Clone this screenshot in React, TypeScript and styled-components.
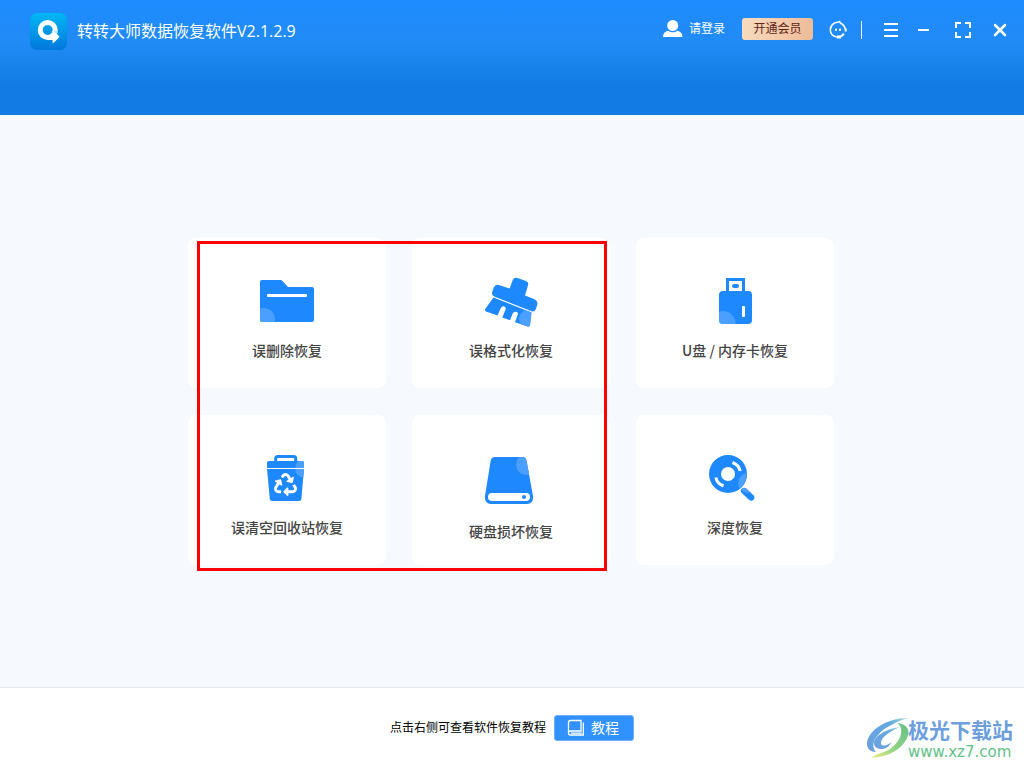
import React from "react";
import styled, { createGlobalStyle } from "styled-components";
import { FaRecycle } from "react-icons/fa";

const BLUE = "#1e88ff";
const SHINE = "#4ba0ff";

const GlobalStyle = createGlobalStyle`
  * { box-sizing: border-box; }
  body {
    margin: 0;
    font-family: "Open Sans", "Noto Sans CJK SC", sans-serif;
    color: #444;
  }
  button { font: inherit; cursor: pointer; }
`;

const Page = styled.div`
  position: relative;
  display: flex;
  flex-direction: column;
  min-height: 100vh;
  background: #f6f9fe;
`;

const Header = styled.header`
  height: 115px;
  background: linear-gradient(#1e8cff 0, #218bf5 42px, #127ce4 88px);
  color: #fff;
`;

const TitleBar = styled.div`
  display: flex;
  align-items: center;
  height: 63px;
  padding: 0 14px 0 30px;
`;

const Title = styled.h1`
  flex: 1;
  margin: 0 0 0 10px;
  padding-bottom: 2px;
  font-size: 16px;
  line-height: 24px;
  font-weight: 400;
`;

const Tools = styled.div`
  display: flex;
  align-items: center;
  align-self: flex-start;
  height: 59px;
`;

const Account = styled.div`
  display: flex;
  align-items: center;
  gap: 16px;
  margin-right: 12px;
`;

const WindowControls = styled.div`
  display: flex;
  align-items: center;
  gap: 17px;
`;

const Divider = styled.span`
  width: 1px;
  height: 18px;
  background: #fff;
`;

const IconButton = styled.button`
  display: flex;
  padding: 0;
  border: 0;
  background: none;
  color: #fff;
`;

const LoginButton = styled(IconButton)`
  align-items: center;
  gap: 6px;
  font-size: 12px;
  line-height: 18px;
  padding: 0 1px 2px 0;
`;

const VipButton = styled.button`
  width: 71px;
  height: 22px;
  margin-bottom: 1px;
  padding: 0;
  border: 0;
  border-radius: 3px;
  background: linear-gradient(100deg, #f8dcc0, #edbb98);
  color: #5e2416;
  font-size: 12px;
  line-height: 18px;
`;

const Main = styled.main`
  flex: 1;
  display: flex;
  align-items: center;
  justify-content: center;
  padding: 24px 26px 24px 24px;
`;

const Grid = styled.div`
  position: relative;
  display: grid;
  grid-template-columns: repeat(3, 198px);
  gap: 27px 26px;
`;

const Card = styled.button<{ $iconGap: number }>`
  display: flex;
  flex-direction: column;
  align-items: center;
  justify-content: flex-start;
  gap: ${(p) => p.$iconGap}px;
  height: 150px;
  padding: 34px 0 0;
  border: 0;
  border-radius: 8px;
  background: #fff;
  color: #444;
  font-size: 14px;
  line-height: 20px;
  font-weight: 500;
  font-family: "Noto Sans CJK SC", sans-serif;
`;

const Highlight = styled.div`
  position: absolute;
  inset: 3px 227px -6px 9px;
  border: 3px solid #fe0000;
  pointer-events: none;
`;

const Footer = styled.footer`
  display: flex;
  align-items: center;
  justify-content: center;
  gap: 8px;
  height: 81px;
  border-top: 1px solid #e6ebf1;
  background: #fff;
  color: #000;
  font-size: 12px;
  line-height: 18px;
`;

const GuideButton = styled.button`
  display: flex;
  align-items: center;
  gap: 6px;
  width: 80px;
  height: 26px;
  padding: 0 12px;
  border: 1px solid #6db1ff;
  border-radius: 3px;
  background: #3091ff;
  color: #fff;
  font-size: 14px;
  line-height: 20px;
  white-space: nowrap;
`;

const Watermark = styled.div`
  position: absolute;
  right: 11px;
  bottom: 7px;
  display: flex;
  align-items: center;
`;

const WatermarkText = styled.div`
  display: flex;
  flex-direction: column;
  margin-left: -4px;
`;

const SiteName = styled.span`
  color: #6c9fdc;
  font-size: 21px;
  line-height: 26px;
  font-weight: 700;
`;

const SiteUrl = styled.span`
  color: #62c188;
  font-family: "DejaVu Sans", sans-serif;
  font-size: 15px;
  line-height: 18px;
`;

const Logo = () => (
  <svg width="37" height="37" viewBox="0 0 37 37" aria-hidden="true">
    <defs>
      <linearGradient id="logo" x1="0" y1="0" x2="0" y2="1">
        <stop offset="0" stopColor="#00b8f5" />
        <stop offset="1" stopColor="#0077dc" />
      </linearGradient>
    </defs>
    <rect width="37" height="37" rx="7" fill="url(#logo)" />
    <circle cx="17.700" cy="17" r="7.500" fill="none" stroke="#fff" strokeWidth="5" />
    <path d="M17 22h5.500v-4q0-1.200 1-.5l5.500 5.500q.8.800 0 1.600L23.500 30q-1 .7-1-.5V27H17z" fill="#fff" />
    <path d="M22.500 17.500h5.200c0 1.500-.3 2.500-.8 4l-3.400-3.800z" fill="#c3e4fb" />
  </svg>
);

const UserIcon = () => (
  <svg width="20" height="20" viewBox="0 0 20 20" fill="#fff" aria-hidden="true">
    <circle cx="9.700" cy="6.500" r="5.500" />
    <path d="M0 18c0-3.500 2-5.500 5-6.200 3 2 6.500 2 9.400 0 3 .7 5 2.700 5 6.200z" />
  </svg>
);

const ServiceIcon = () => (
  <svg width="20" height="20" viewBox="0 0 20 20" fill="none" stroke="#fff" aria-hidden="true">
    <path d="M8 17C4 16.500 1.300 13.500 1.300 10c0-4.200 3.200-7.500 7.300-7.700l2-.8q.3 2 2.200 2.300Q16 6 16.300 9.500" strokeWidth="1.600" />
    <path d="M16.700 8.500v3M14.800 13.500q-1 2-3 2.800" strokeWidth="2" />
    <path d="M8 17h4" strokeWidth="3" />
    <path d="M6 9.700h2M10 9.700h2" strokeWidth="2" />
  </svg>
);

const MenuIcon = () => (
  <svg width="20" height="20" viewBox="0 0 20 20" fill="#fff" aria-hidden="true">
    <path d="M5 3h14v2H5zM5 9h14v2H5zM5 15h14v2H5z" />
  </svg>
);

const MinimizeIcon = () => (
  <svg width="20" height="20" viewBox="0 0 20 20" fill="#fff" aria-hidden="true">
    <path d="M2 9h11v2H2z" />
  </svg>
);

const MaximizeIcon = () => (
  <svg width="20" height="20" viewBox="0 0 20 20" fill="none" stroke="#fff" strokeWidth="2" aria-hidden="true">
    <path d="M3 8V3h5M12 3h5v5M17 12v5h-5M8 17H3v-5" />
  </svg>
);

const CloseIcon = () => (
  <svg width="20" height="20" viewBox="0 0 20 20" fill="none" stroke="#fff" strokeWidth="2.500" strokeLinecap="round" aria-hidden="true">
    <path d="M5 5l10 10M15 5L5 15" />
  </svg>
);

const CardIcon = ({ children }: { children: React.ReactNode }) => (
  <svg width="60" height="56" viewBox="0 0 60 56" fill={BLUE} aria-hidden="true">
    {children}
  </svg>
);

const FolderIcon = () => (
  <CardIcon>
    <clipPath id="folder">
      <path d="M5 8h18.500q1.200 0 2 1l5.500 6h24q2 0 2 2v31q0 2-2 2H5q-2 0-2-2V10q0-2 2-2z" />
    </clipPath>
    <g clipPath="url(#folder)">
      <rect width="60" height="56" />
      <circle cx="6.500" cy="47.500" r="11.500" fill={SHINE} />
    </g>
    <rect x="10" y="22" width="40" height="3" rx="1" fill="#fff" />
  </CardIcon>
);

const BrushIcon = () => (
  <CardIcon>
    <clipPath id="bristles">
      <path d="M12.500 25.500L50.500 40.500 49 53q-.3 2-2.300 1.500L34 50.300l3-8.300q0-2.500-2.500-2.300-2 0-2.700 1.500L29 48.200l-7.700-2.700 3.400-8.500q.4-2.300-2-2.700-2 0-2.800 1.500L16.500 43.500 5 39.500q-1.700-.8-.8-2.500z" />
    </clipPath>
    <path d="M36.500 6l8.500 3q3 1.300 2 4.200L44 23.500l9.500 3.800q4 2 2.600 6l-1.300 4q-1.200 2.800-4.200 2L13.200 24.500q-3-1.500-2-4.500l1.500-4.500q1.500-3.500 5-2.600l11 3.600 3-8.500Q33 5 36.500 6z" />
    <g clipPath="url(#bristles)">
      <rect width="60" height="56" />
      <circle cx="48" cy="47" r="10" fill={SHINE} />
    </g>
  </CardIcon>
);

const UsbIcon = () => (
  <CardIcon>
    <clipPath id="usb">
      <rect x="14" y="19" width="33" height="33" rx="4" />
    </clipPath>
    <path fillRule="evenodd" d="M21 6h19v13H21zM24 9v10h13V9z" />
    <rect x="27" y="12" width="7" height="4" rx="2" />
    <g clipPath="url(#usb)">
      <rect width="60" height="56" />
      <circle cx="18" cy="51.500" r="12.500" fill={SHINE} />
    </g>
    <rect x="37" y="34" width="3" height="11" rx="1" fill="#fff" />
  </CardIcon>
);

const BinIcon = () => (
  <CardIcon>
    <clipPath id="bin">
      <path d="M12 12h33q2 0 2 2v5H10v-5q0-2 2-2zM10 20h37l-2.600 30q-.2 2-2.200 2H15q-2 0-2.200-2z" />
    </clipPath>
    <path d="M18.700 13V9.500q0-2 2-2h16q2 0 2 2V13" fill="none" stroke={BLUE} strokeWidth="3" />
    <g clipPath="url(#bin)">
      <rect width="60" height="56" />
      <circle cx="47" cy="19.500" r="9" fill={SHINE} />
      <path d="M10 19h37v1H10z" fill="#fff" />
    </g>
    <FaRecycle x="17" y="24" size={23} color="#fff" />
  </CardIcon>
);

const DiskIcon = () => (
  <CardIcon>
    <clipPath id="disk">
      <path d="M14 8h27q4 0 4.600 4L52 47q.8 8-6 8H10q-6.800 0-6-8L9.600 12q.6-4 4.400-4z" />
    </clipPath>
    <g clipPath="url(#disk)">
      <rect width="60" height="56" />
      <circle cx="45.500" cy="15.500" r="10.500" fill={SHINE} />
    </g>
    <rect x="7" y="44" width="42" height="8" rx="4" fill="#fff" />
    <circle cx="43" cy="48" r="2" />
  </CardIcon>
);

const SearchIcon = () => (
  <CardIcon>
    <clipPath id="lens">
      <circle cx="23" cy="25" r="19" />
      <path d="M36 40.500q2.500-3 5.500-.7l7 6.500q2 2 0 4.500-2.300 2-4.500 0l-7-6.500q-2-2-1-3.800z" />
    </clipPath>
    <g clipPath="url(#lens)">
      <rect width="60" height="56" />
      <circle cx="43" cy="34" r="10" fill={SHINE} />
    </g>
    <circle cx="23" cy="25" r="7" fill="#fff" />
    <path d="M27.500 13.500Q34 16 35.200 22M10.800 28.500Q12 34.500 18.500 37" fill="none" stroke="#fff" strokeWidth="3" />
  </CardIcon>
);

const BookIcon = () => (
  <svg width="18" height="18" viewBox="0 0 18 18" fill="none" stroke="#fff" strokeWidth="1.300" aria-hidden="true">
    <path d="M1.500 14V3.500q0-2 2-2H14V12H3.500Q1.500 12 1.500 14q0 2 2 2h12.800V3.500M4 14.100h11" />
  </svg>
);

const WatermarkLogo = () => (
  <svg width="46" height="44" viewBox="0 0 46 44" aria-hidden="true">
    <defs>
      <linearGradient id="swirlTop" x1="1" y1="0" x2="0" y2="1">
        <stop offset="0" stopColor="#a5dccb" />
        <stop offset=".3" stopColor="#62aae4" />
        <stop offset="1" stopColor="#6c9fdc" />
      </linearGradient>
      <linearGradient id="swirlBottom" x1="1" y1="0" x2="0" y2="1">
        <stop offset="0" stopColor="#62c188" />
        <stop offset=".55" stopColor="#8fd185" />
        <stop offset="1" stopColor="#f0ec86" />
      </linearGradient>
    </defs>
    <path d="M42 1C20 1 1 14 1 27c0 5 4 8 9 8-9-11 6-26 32-34z" fill="url(#swirlTop)" />
    <path d="M34 10C19 12 7 20 8 27c1 7 15 7 17-2-3 4-10 5-10 1 0-5 7-11 19-16z" fill="url(#swirlTop)" />
    <path d="M31 6c10 1 14 7 10 15-5 11-18 19-36 20 4-3 7-4 10-5 10-3 16-9 19-16 2-5 2-11-3-14z" fill="url(#swirlBottom)" />
  </svg>
);

const modes = [
  { label: "误删除恢复", Icon: FolderIcon },
  { label: "误格式化恢复", Icon: BrushIcon },
  { label: "U盘 / 内存卡恢复", Icon: UsbIcon },
  { label: "误清空回收站恢复", Icon: BinIcon },
  { label: "硬盘损坏恢复", Icon: DiskIcon, iconGap: 16 },
  { label: "深度恢复", Icon: SearchIcon },
];

export default function App() {
  return (
    <Page>
      <GlobalStyle />
      <Header>
        <TitleBar>
          <Logo />
          <Title>转转大师数据恢复软件V2.1.2.9</Title>
          <Tools>
            <Account>
              <LoginButton>
                <UserIcon />
                请登录
              </LoginButton>
              <VipButton>开通会员</VipButton>
              <IconButton aria-label="客服"><ServiceIcon /></IconButton>
            </Account>
            <WindowControls>
              <Divider />
              <IconButton aria-label="菜单"><MenuIcon /></IconButton>
              <IconButton aria-label="最小化"><MinimizeIcon /></IconButton>
              <IconButton aria-label="最大化"><MaximizeIcon /></IconButton>
              <IconButton aria-label="关闭"><CloseIcon /></IconButton>
            </WindowControls>
          </Tools>
        </TitleBar>
      </Header>
      <Main>
        <Grid>
          {modes.map(({ label, Icon, iconGap = 12 }) => (
            <Card key={label} $iconGap={iconGap}>
              <Icon />
              {label}
            </Card>
          ))}
          <Highlight />
        </Grid>
      </Main>
      <Footer>
        <span>点击右侧可查看软件恢复教程</span>
        <GuideButton>
          <BookIcon />
          教程
        </GuideButton>
      </Footer>
      <Watermark>
        <WatermarkLogo />
        <WatermarkText>
          <SiteName>极光下载站</SiteName>
          <SiteUrl>www.xz7.com</SiteUrl>
        </WatermarkText>
      </Watermark>
    </Page>
  );
}
